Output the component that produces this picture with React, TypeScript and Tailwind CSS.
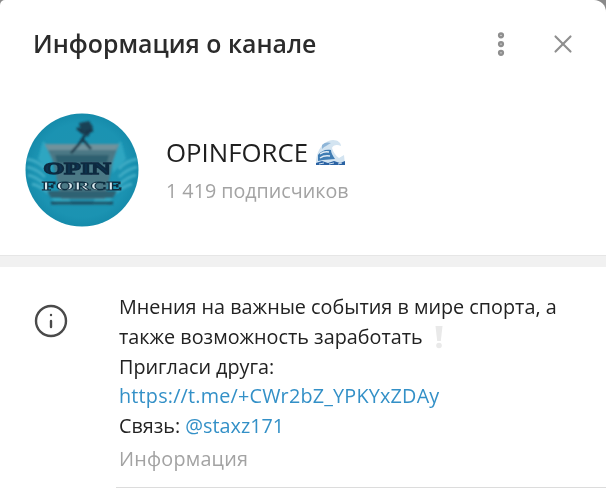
import React from 'react';
import { MoreVertical, X, Info } from 'lucide-react';

const Avatar = () => (
  <svg width="114" height="114" viewBox="0 0 114 114" className="shrink-0">
    <defs>
      <radialGradient id="bg" cx="50%" cy="50%" r="55%">
        <stop offset="0%" stopColor="#1f93b0" />
        <stop offset="75%" stopColor="#1b93b2" />
        <stop offset="100%" stopColor="#1286a6" />
      </radialGradient>
      <clipPath id="round"><circle cx="57" cy="57" r="56.5" /></clipPath>
      <filter id="soft"><feGaussianBlur stdDeviation="0.9" /></filter>
      <filter id="softer"><feGaussianBlur stdDeviation="0.4" /></filter>
    </defs>
    <g clipPath="url(#round)">
      <rect width="114" height="114" fill="url(#bg)" />
      <g filter="url(#soft)">
        {/* wings */}
        <g stroke="#45b0c8" strokeWidth="3" fill="none" opacity="0.85">
          <path d="M2 46 Q14 48 20 56" />
          <path d="M2 54 Q12 56 20 64" />
          <path d="M3 62 Q12 64 20 72" />
          <path d="M7 71 Q15 73 24 80" />
          <path d="M112 46 Q100 48 94 56" />
          <path d="M112 54 Q102 56 94 64" />
          <path d="M111 62 Q102 64 94 72" />
          <path d="M107 71 Q99 73 90 80" />
        </g>
        <path d="M18 28 Q30 38 26 60 L13 46 Z" fill="#2ea6c1" />
        <path d="M96 28 Q84 38 88 60 L101 46 Z" fill="#2ea6c1" />
        <path d="M24 82 Q34 88 42 78 L46 92 L32 92 Z" fill="#2fa9c3" />
        <path d="M90 82 Q80 88 72 78 L68 92 L82 92 Z" fill="#2fa9c3" />
        {/* banner */}
        <path d="M20 31 L94 31 L88 48 L80 86 L36 86 L28 48 Z" fill="#4c7885" />
        <path d="M20 31 L94 31 L91 37 L23 37 Z" fill="#6f929c" />
        <path d="M30 42 L84 42 L82 50 L32 50 Z" fill="#2f6070" />
        <path d="M22 78 L92 78 L88 85 L26 85 Z" fill="#2f6273" />
        <path d="M26 90 L88 90" stroke="#1f4e62" strokeWidth="3" />
        {/* figure */}
        <path d="M46 40 L55 30 L60 22 M58 27 L66 36 M58 20 L52 15 M60 20 L68 17" stroke="#173446" strokeWidth="2.5" fill="none" />
        <path d="M54 10 L64 8 L68 14 L63 24 L56 20 Z" fill="#173446" opacity="0.85" />
      </g>
      <g filter="url(#softer)">
        <text x="52" y="61" textAnchor="middle" fontFamily="'Liberation Serif', serif" fontWeight="700" fontSize="16" fill="#10334f" stroke="#0b2a40" strokeWidth="1.4" textLength="67" lengthAdjust="spacingAndGlyphs">OPIN</text>
        <text x="57" y="77" textAnchor="middle" fontFamily="'Liberation Serif', serif" fontWeight="700" fontSize="13" fill="#dbe9ee" stroke="#0f2d40" strokeWidth="0.8" textLength="80" lengthAdjust="spacingAndGlyphs">FORCE</text>
      </g>
    </g>
  </svg>
);

const WaveEmoji = () => (
  <svg width="30" height="27" viewBox="0 0 30 27" className="shrink-0">
    <path d="M1 25 C1 13 7 2 18 1 C23 1 26 4 26 7 C22 5 18 6 17 9 C18 13 21 17 24 19 L29 16 L30 26 L1 26 Z" fill="#d3e4f1" />
    <path d="M3 16 C6 12 10 10 16 11 C16 14 18 17 20 20 L8 21 L3 22 Z" fill="#3f7cb3" />
    <path d="M7 6 C10 3 13 3 16 4 C13 6 10 7 7 10 Z" fill="#8fb6d8" />
    <path d="M5 15 Q9 12 14 13 M5 19 Q9 16 15 17" stroke="#dfeaf4" strokeWidth="1.3" fill="none" />
    <path d="M1 26 L30 26 L30 22 L25 24 L19 22 L13 24 L7 22 L1 24 Z" fill="#2a62a3" />
    <path d="M4 25 L9 24 M14 25 L19 24 M23 25 L27 24" stroke="#cfe0ee" strokeWidth="1" />
  </svg>
);

const PaleExclamation = () => (
  <svg width="10" height="24" viewBox="0 0 10 24" className="inline-block align-[-5px] ml-[11px]">
    <path d="M1.5 1 L8.5 1 L6.8 16 L3.2 16 Z" fill="#e9e9e9" />
    <circle cx="5" cy="20.5" r="2.8" fill="#e9e9e9" />
  </svg>
);

export default function App() {
  return (
    <div className="w-[606px] h-[497px] overflow-hidden bg-[#8a8a8a]">
      <div className="h-full overflow-hidden bg-white rounded-tl-[5px] rounded-tr-[12px] font-['Open_Sans',sans-serif] blur-[0.35px]">
        <header className="h-[88px] flex items-center pl-[33px] pr-[30px]">
          <h1 className="text-[24.85px] font-semibold text-[#2b2b2b] flex-1">Информация о канале</h1>
          <MoreVertical size={30} strokeWidth={3} className="text-[#8f8f8f] mr-[32px]" />
          <X size={30} strokeWidth={1.7} className="text-[#8f8f8f] -mr-[2px]" />
        </header>

        <section className="h-[167px] flex items-start pl-[25px] pt-[25px]">
          <Avatar />
          <div className="ml-[27px] pt-[22px]">
            <div className="flex items-center gap-[7px] text-[25.8px] leading-[34px] font-medium text-[#1f1f1f]">
              OPINFORCE
              <WaveEmoji />
            </div>
            <div className="text-[19.7px] leading-[28px] mt-[8px] text-[#a3a3a3]">1 419 подписчиков</div>
          </div>
        </section>

        <div className="h-[12px] bg-[#f1f1f1] border-t border-[#e6e6e6]" />

        <section className="flex pt-[25px]">
          <div className="w-[116px] shrink-0 pl-[33px] pt-[11px]">
            <Info size={36} strokeWidth={1.6} className="text-[#4a4a4a]" />
          </div>
          <div className="flex-1">
            <div className="pl-[3px] text-[19.8px] leading-[29.75px] text-[#222222]">
              <div>Мнения на важные события в мире спорта, а</div>
              <div>также возможность заработать<PaleExclamation /></div>
              <div>Пригласи друга:</div>
              <div className="text-[#3390c7] tracking-[0.2px]">https://t.me/+CWr2bZ_YPKYxZDAy</div>
              <div>Связь: <span className="text-[#3390c7]">@staxz171</span></div>
              <div className="text-[#a3a3a3] mt-[3px] tracking-[0.2px]">Информация</div>
            </div>
            <div className="mt-[13px] border-t border-[#dcdcdc]" />
          </div>
        </section>
      </div>
    </div>
  );
}
